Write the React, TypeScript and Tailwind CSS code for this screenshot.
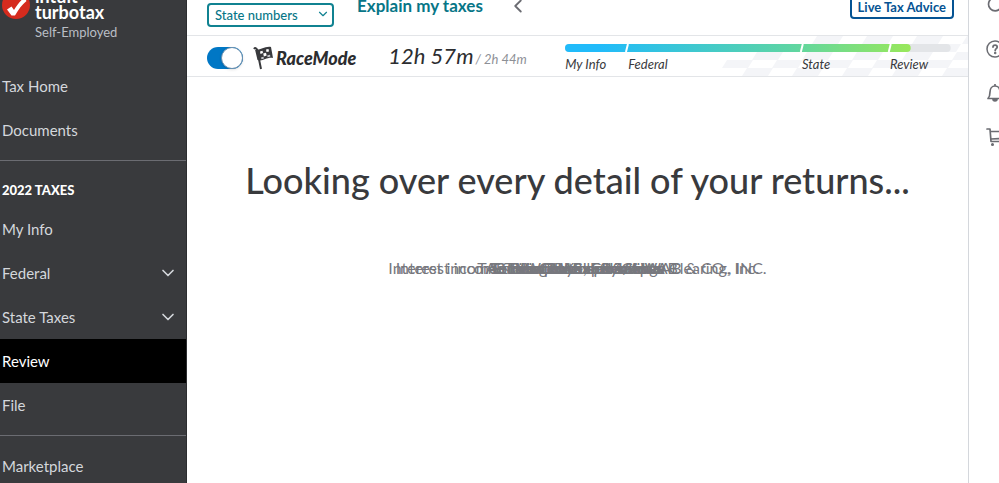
import { ChevronDown, ChevronLeft, Search } from "lucide-react";

const messages = [
  "Interest income from CHARLES SCHWAB & CO., INC.",
  "Interest income from Robinhood/Apex Clearing, Inc.",
  "TASTYWORKS, CHAS. WAB",
  "Total income and savings",
  "Self-employment income",
  "Estimated tax payments",
  "Student loan deductions",
  "Filing status, Rental",
  "Medical expenses",
];

function NavItem({ label, active, expandable }: { label: string; active?: boolean; expandable?: boolean }) {
  return (
    <a
      href="#"
      className={
        active
          ? "flex h-11 shrink-0 items-center justify-between bg-black pl-[2px] pr-2 text-white"
          : "flex h-11 shrink-0 items-center justify-between pl-[2px] pr-2 text-[#d4d7dc]"
      }
    >
      {label}
      {expandable && <ChevronDown size={20} strokeWidth={2} />}
    </a>
  );
}

function Logo() {
  return (
    <div className="-mt-3 flex gap-1 pl-[2px]">
      <svg width="29" height="32" viewBox="0 0 29 32" className="shrink-0">
        <circle cx="14" cy="17" r="14" fill="#d52b1e" />
        <path d="M5 21.5 L9.5 18.5 L12 22 C15 17 18 13 22.5 9.5 L24.5 13 C20 16.500 16.500 21.500 13 27.500 L9.500 27.500 Z" fill="#fff" />
      </svg>
      <div>
        <div className="text-lg leading-4 font-bold text-white">
          intuit
          <br />
          turbotax
        </div>
        <div className="mt-1 text-[13px] leading-4 text-[#babec5]">Self-Employed</div>
      </div>
    </div>
  );
}

function Sidebar() {
  return (
    <nav className="flex w-[187px] shrink-0 flex-col overflow-hidden border-r border-[#2c2d30] bg-[#393a3d] text-[15px]">
      <div className="h-16 shrink-0">
        <Logo />
      </div>
      <NavItem label="Tax Home" />
      <NavItem label="Documents" />
      <hr className="mt-2 border-[#6b6c72]" />
      <h2 className="flex h-[46px] shrink-0 items-center pt-[14px] pl-[2px] text-[13px] font-black text-white">2022 TAXES</h2>
      <NavItem label="My Info" />
      <NavItem label="Federal" expandable />
      <NavItem label="State Taxes" expandable />
      <NavItem label="Review" active />
      <NavItem label="File" />
      <hr className="my-2 border-[#6b6c72]" />
      <NavItem label="Marketplace" />
    </nav>
  );
}

function TopBar() {
  return (
    <header className="flex h-9 shrink-0 items-start border-b border-[#e3e5e8] pr-[14px] pl-5">
      <div className="relative mt-[2px] w-[127px]">
        <select
          aria-label="State numbers"
          className="h-6 w-full appearance-none rounded border-2 border-[#108291] bg-white pl-[6px] text-[13px] leading-4 font-medium text-[#077687]"
        >
          <option>State numbers</option>
        </select>
        <ChevronDown size={14} className="pointer-events-none absolute top-[5px] right-1 text-[#108291]" />
      </div>
      <a href="#" className="-mt-1 ml-[23px] text-[17px] leading-5 font-bold text-[#077687]">
        Explain my taxes
      </a>
      <button aria-label="Collapse" className="-mt-[5px] ml-6 text-[#6b6c72]">
        <ChevronLeft size={22} />
      </button>
      <button className="-mt-[5px] ml-auto h-6 rounded border-2 border-[#055393] px-[6px] text-[13px] leading-4 font-bold text-[#055393]">
        Live Tax Advice
      </button>
    </header>
  );
}

function Flag() {
  return (
    <svg width="20" height="24" viewBox="0 0 20 24" fill="none">
      <path d="M1 3 C2 1.500 3.500 2 4 3.500 L8 23" stroke="#393a3d" strokeWidth="2" />
      <path d="M2 3.500 C7 5 11 0 18 1 L20 12 C13 11 10 16 4.500 14 Z" fill="#393a3d" />
      <path d="M7 5.500 L9.500 4.700 L10 7 L7.500 8 Z M13 3.500 L15.500 3 L16 5.500 L13.500 6 Z M10.200 7.500 L13 6.700 L13.700 9.500 L10.900 10.500 Z" fill="#fff" />
      <path d="M8 11.500 L10.400 10.700 L11 12.500 L8.500 13.200 Z M14.200 9.500 L17 8.800 L17.400 10.600 L14.600 11.200 Z" fill="#c9cbd0" />
    </svg>
  );
}

// slanted checkered strip that sits behind the progress bar
function Checkers() {
  const rows = [90, 208, 30, 0, 20];
  return (
    <svg width="246" height="40" className="absolute right-0 bottom-0">
      {rows.map((start, r) =>
        [0, 1, 2, 3, 4].map(i => {
          const x = start + i * 50;
          const y = r * 8;
          return <path key={`${r}-${i}`} d={`M${x + 5} ${y} h26 l-5 8 h-26 z`} fill="#f4f5f8" />;
        }),
      )}
    </svg>
  );
}

const stages = [
  { name: "My Info", size: "w-[63px]" },
  { name: "Federal", size: "flex-1" },
  { name: "State", size: "w-[88px]" },
  { name: "Review", size: "w-[61px]" },
];

function RaceBar() {
  return (
    <section className="relative flex h-[41px] shrink-0 items-center border-b border-[#e3e5e8] pt-[3px] pl-5">
      <Checkers />
      <label className="relative flex h-6 w-9 cursor-pointer">
        <input type="checkbox" defaultChecked aria-label="RaceMode" className="peer sr-only" />
        <span className="my-[1px] h-[22px] w-9 rounded-full bg-[#0077c5]" />
        <span className="absolute top-[1px] right-0 size-[22px] rounded-full border border-[#6b8fae] bg-white shadow" />
      </label>
      <div className="ml-[10px] flex items-center text-[#2c2d30]">
        <Flag />
        <span className="ml-[3px] text-lg leading-6 font-black italic">RaceMode</span>
      </div>
      <div className="ml-8 flex w-[145px] items-baseline gap-[2px] text-[22px] leading-6 whitespace-nowrap text-[#2c2d30] italic">
        12h 57m <span className="text-[13px] text-[#8d9096]">/ 2h 44m</span>
      </div>
      <div className="relative mr-[17px] ml-8 flex-1">
        <svg viewBox="0 0 386 8" preserveAspectRatio="none" className="h-2 w-full">
          <defs>
            <linearGradient id="speed" gradientUnits="userSpaceOnUse" x1="0" x2="346" y1="0" y2="0">
              <stop offset="0.1" stopColor="#21bbfa" />
              <stop offset="0.65" stopColor="#5dd5a4" />
              <stop offset="1" stopColor="#99e85a" />
            </linearGradient>
          </defs>
          <rect width="386" height="8" rx="4" fill="#e3e5e8" />
          <rect width="346" height="8" rx="4" fill="url(#speed)" />
          <path d="M61 8 L63 0 M236 8 L238 0 M324 8 L326 0" stroke="#fff" strokeWidth="2" />
        </svg>
        <div className="mt-1 flex text-[13px] leading-4 text-[#393a3d] italic">
          {stages.map(s => (
            <span key={s.name} className={s.size}>
              {s.name}
            </span>
          ))}
        </div>
      </div>
    </section>
  );
}

function HelpIcon() {
  return (
    <svg width="20" height="20" viewBox="0 0 20 20" fill="none" stroke="currentColor" strokeWidth="1.500" strokeLinecap="round">
      <circle cx="9" cy="10" r="8" />
      <path d="M7 8 C7 5.300 11.200 5.500 11.200 8 C11.200 9.700 9.200 9.600 9.200 11.500" strokeWidth="1.800" />
      <circle cx="9.200" cy="14" r="0.500" fill="currentColor" />
    </svg>
  );
}

function BellIcon() {
  return (
    <svg width="20" height="20" viewBox="0 0 20 20" fill="none" stroke="currentColor" strokeWidth="1.700" strokeLinejoin="round">
      <path d="M9 1 V3 M2 15.500 C4 13.500 4 11.500 4 9 C4 5.500 6 3 9 3 C12 3 14 5.500 14 9 C14 11.500 14 13.500 16 15.500 Z" />
      <path d="M7 16 C7 18.500 11 18.500 11 16 Z" fill="currentColor" />
    </svg>
  );
}

function CartIcon() {
  return (
    <svg width="20" height="20" viewBox="0 0 20 20" fill="none" stroke="currentColor" strokeWidth="1.700" strokeLinecap="round" strokeLinejoin="round">
      <path d="M1 2 H4 L5 14.500 H18 M4.300 4.500 H19 L17.500 11.500 L5 12" />
      <circle cx="6.500" cy="17.500" r="0.700" fill="currentColor" />
      <circle cx="16" cy="17.500" r="0.700" fill="currentColor" />
    </svg>
  );
}

export default function App() {
  return (
    <div className="flex h-screen overflow-hidden bg-white font-['Lato',sans-serif]">
      <Sidebar />
      <div className="flex min-w-0 flex-1 flex-col border-r border-[#d4d7dc]">
        <TopBar />
        <RaceBar />
        <main className="pt-[79px] text-center">
          <h1 className="text-4xl leading-12 font-medium whitespace-nowrap text-[#393a3d]">
            Looking over every detail of your returns...
          </h1>
          <div className="mt-[52px] grid text-base leading-6 text-[#77787e]">
            {messages.map(m => (
              <p key={m} className="col-start-1 row-start-1">
                {m}
              </p>
            ))}
          </div>
        </main>
      </div>
      <aside className="flex w-[30px] shrink-0 flex-col gap-6 overflow-hidden pl-[17px] text-[#6b6c72]">
        <button aria-label="Search" className="-mt-[5px] w-5">
          <Search size={20} />
        </button>
        <button aria-label="Help" className="w-5">
          <HelpIcon />
        </button>
        <button aria-label="Notifications" className="w-5">
          <BellIcon />
        </button>
        <button aria-label="Cart" className="w-5">
          <CartIcon />
        </button>
      </aside>
    </div>
  );
}
